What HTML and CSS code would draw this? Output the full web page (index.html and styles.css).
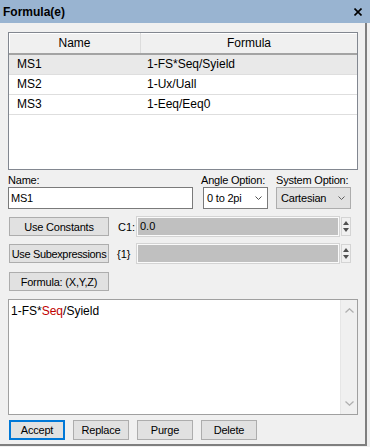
FILE: index.html
```html
<!DOCTYPE html>
<html>
<head>
<meta charset="utf-8">
<link rel="stylesheet" href="styles.css">
</head>
<body>
<div class="titlebar">
  <span class="title">Formula(e)</span>
  <svg class="close" width="8" height="8" viewBox="0 0 8 8"><path d="M0.5 0.5 L7.5 7.5 M7.5 0.5 L0.5 7.5" stroke="#000" stroke-width="1.6"/></svg>
</div>
<div class="content">
  <div class="list">
    <div class="lhead"><div class="c1">Name</div><div class="c2">Formula</div></div>
    <div class="row sel"><div class="c1">MS1</div><div class="c2">1-FS*Seq/Syield</div></div>
    <div class="row"><div class="c1">MS2</div><div class="c2">1-Ux/Uall</div></div>
    <div class="row"><div class="c1">MS3</div><div class="c2">1-Eeq/Eeq0</div></div>
  </div>

  <div class="form">
    <div class="fcol fname"><span class="lbl">Name:</span><div class="input">MS1</div></div>
    <div class="fcol fangle"><span class="lbl">Angle Option:</span>
      <div class="select white"><span>0 to 2pi</span><svg width="7" height="4" viewBox="0 0 7 4"><path d="M0.5 0.5 L3.5 3.5 L6.5 0.5" fill="none" stroke="#505050" stroke-width="1"/></svg></div>
    </div>
    <div class="fcol fsystem"><span class="lbl">System Option:</span>
      <div class="select gray"><span>Cartesian</span><svg width="7" height="4" viewBox="0 0 7 4"><path d="M0.5 0.5 L3.5 3.5 L6.5 0.5" fill="none" stroke="#606060" stroke-width="1"/></svg></div>
    </div>
  </div>

  <div class="crow r1">
    <button class="btn wide">Use Constants</button>
    <span class="clabel">C1:</span>
    <div class="gfield">0.0</div>
    <div class="spin"><span class="up"></span><span class="down"></span></div>
  </div>
  <div class="crow r2">
    <button class="btn wide">Use Subexpressions</button>
    <span class="clabel">{1}</span>
    <div class="gfield"></div>
    <div class="spin"><span class="up"></span><span class="down"></span></div>
  </div>
  <div class="crow r3">
    <button class="btn wide">Formula: (X,Y,Z)</button>
  </div>

  <div class="editor">
    <div class="text">1-FS*<span class="red">Seq</span>/Syield</div>
    <div class="scroll">
      <svg width="9" height="5" viewBox="0 0 9 5"><path d="M0.5 4.5 L4.5 0.8 L8.5 4.5" fill="none" stroke="#b0b0b0" stroke-width="1.3"/></svg>
      <svg width="9" height="5" viewBox="0 0 9 5"><path d="M0.5 0.5 L4.5 4.2 L8.5 0.5" fill="none" stroke="#b0b0b0" stroke-width="1.3"/></svg>
    </div>
  </div>

  <div class="actions">
    <button class="btn act accept">Accept</button>
    <button class="btn act">Replace</button>
    <button class="btn act">Purge</button>
    <button class="btn act">Delete</button>
  </div>
</div>
</body>
</html>
```
FILE: styles.css
```css
* { box-sizing: border-box; }
body {
  margin: 0;
  width: 370px;
  height: 447px;
  overflow: hidden;
  background: #f0f0f0;
  font-family: "Liberation Sans", Arial, sans-serif;
  color: #000;
}
.titlebar {
  height: 23px;
  background: #99b4d1;
  display: flex;
  align-items: center;
  justify-content: space-between;
  padding: 0 8px 0 3px;
  font-size: 12px;
  font-weight: bold;
}
.close { display: block; }
.content {
  width: 367px;
  height: 423px;
  border-right: 2px solid #7f7f7f;
  border-bottom: 2px solid #7f7f7f;
  padding: 9px 0 0 8px;
  display: flex;
  flex-direction: column;
}
.list {
  width: 350px;
  height: 138px;
  flex: none;
  border: 1px solid #828790;
  background: #fff;
  font-size: 12px;
}
.lhead {
  display: flex;
  height: 22px;
  background: #f0f0f0;
  border-bottom: 2px solid #a3a3a3;
  box-shadow: inset 1px 1px 0 #fff;
}
.lhead .c1 {
  width: 132px;
  border-right: 1px solid #dcdcdc;
  text-align: center;
  line-height: 20px;
}
.lhead .c2 {
  flex: 1;
  text-align: center;
  line-height: 20px;
}
.row {
  display: flex;
  height: 20px;
  border-bottom: 1px solid #dedede;
  line-height: 19px;
}
.row.sel { background: #e9e9e9; }
.row .c1 { width: 132px; padding-left: 8px; }
.row .c2 { padding-left: 6px; }

.form {
  display: flex;
  margin-top: 4px;
  font-size: 11px;
  letter-spacing: -0.2px;
  flex: none;
}
.fcol { display: flex; flex-direction: column; }
.lbl { height: 13px; line-height: 13px; white-space: nowrap; }
.fname { width: 185px; }
.fangle { width: 67px; margin-left: 8px; }
.fsystem { width: 75px; margin-left: 8px; }
.input {
  height: 22px;
  border: 1px solid #7a7a7a;
  background: #fff;
  padding-left: 2px;
  line-height: 20px;
}
.select {
  height: 22px;
  display: flex;
  align-items: center;
  justify-content: space-between;
  padding: 0 5px 0 3px;
  white-space: nowrap;
}
.select.white {
  margin-left: 2px;
  border: 1px solid #7a7a7a;
  background: #fff;
}
.select.gray {
  border: 1px solid #adadad;
  background: #e1e1e1;
  padding-left: 4px;
}

.crow {
  display: flex;
  align-items: center;
  height: 19px;
  font-size: 11px;
  flex: none;
}
.r1 { margin-top: 8px; }
.r2 { margin-top: 8px; }
.r3 { margin-top: 9px; }
.btn {
  height: 19px;
  border: 1px solid #adadad;
  background: #e1e1e1;
  font-family: "Liberation Sans", Arial, sans-serif;
  font-size: 11px;
  letter-spacing: -0.2px;
  white-space: nowrap;
  color: #000;
  padding: 0;
  margin: 0;
  overflow: visible;
}
.wide { width: 100px; margin-left: 1px; }
.r2 .wide { letter-spacing: -0.35px; }
.clabel { width: 28px; padding-left: 9px; white-space: nowrap; }
.r2 .clabel { padding-left: 8px; }
.gfield {
  width: 202px;
  height: 19px;
  background: #c0c0c0;
  border: 1px solid #fafafa;
  box-shadow: 0 0 0 1px #d4d4d4;
  padding-left: 2px;
  line-height: 17px;
}
.spin {
  width: 10px;
  height: 19px;
  margin-left: 2px;
  border: 1px solid #d4d4d4;
  background: #f0f0f0;
  display: flex;
  flex-direction: column;
  align-items: center;
  justify-content: space-around;
  padding: 2px 0;
}
.up, .down {
  width: 0;
  height: 0;
  border-left: 3px solid transparent;
  border-right: 3px solid transparent;
}
.up { border-bottom: 4px solid #505050; }
.down { border-top: 4px solid #505050; }

.editor {
  margin-top: 8px;
  width: 350px;
  height: 116px;
  flex: none;
  border: 1px solid #a0a0a0;
  background: #fff;
  display: flex;
}
.text {
  flex: 1;
  padding: 4px 0 0 2px;
  font-size: 12px;
  line-height: 15px;
}
.red { color: #c00000; }
.scroll {
  width: 17px;
  background: #f0f0f0;
  border-left: 1px solid #e6e6e6;
  display: flex;
  flex-direction: column;
  justify-content: space-between;
  align-items: center;
  padding: 8px 0 8px;
}
.scroll svg { display: block; }

.actions {
  display: flex;
  gap: 8px;
  margin-top: 5px;
  margin-left: 1px;
  flex: none;
}
.act { width: 56px; height: 20px; }
.accept { border: 2px solid #0078d7; }
```
